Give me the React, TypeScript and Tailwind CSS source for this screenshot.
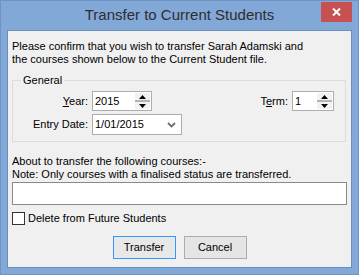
import React from "react";

const font = { fontFamily: '"Liberation Sans", Arial, sans-serif' };

function Arrow({ up }: { up?: boolean }) {
  return (
    <svg width="7" height="4" viewBox="0 0 7 4" className="block">
      {up ? <path d="M0 4 L3.5 0 L7 4 Z" fill="#000" /> : <path d="M0 0 L7 0 L3.5 4 Z" fill="#000" />}
    </svg>
  );
}

function SpinBox({ value, width }: { value: string; width: string }) {
  return (
    <div className={`flex h-[20px] ${width} border border-[#abadb3] bg-white`}>
      <div className="flex flex-1 items-center pl-[2px] text-[11px] leading-[13px] text-black">{value}</div>
      <div className="my-[1px] mr-[1px] flex w-[15px] flex-col">
        <div className="flex flex-1 items-center justify-center bg-[#f2f2f2]">
          <Arrow up />
        </div>
        <div className="h-[2px] bg-[#b4b4b4]" />
        <div className="flex flex-1 items-center justify-center bg-[#f2f2f2]">
          <Arrow />
        </div>
      </div>
    </div>
  );
}

export default function App() {
  return (
    <div
      className="relative flex h-[275px] w-[359px] flex-col border border-[#6f94c4] bg-[#82a8d8] px-[6px] pb-[6px] text-[11px] leading-[13px] text-black"
      style={font}
    >
      <div className="flex h-[29px] items-center justify-center pb-[2px] text-[15px] text-[#2e2e2e]">
        Transfer to Current Students
      </div>
      <div className="absolute right-[6px] top-[1px] flex h-[20px] w-[31px] items-center justify-center bg-[#c75050]">
        <svg width="9" height="8" viewBox="0 0 9 8">
          <path d="M1 0.5 L8 7.5 M8 0.5 L1 7.5" stroke="#fff" strokeWidth="2" />
        </svg>
      </div>
      <div className="flex flex-1 flex-col border border-[#6b8fbd] bg-[#f0f0f0] px-[4px] pb-[5px] pt-[9px]">
        <p>
          Please confirm that you wish to transfer Sarah Adamski and
          <br />
          the courses shown below to the Current Student file.
        </p>
        <fieldset className="mr-[1px] mt-[8px] border border-[#dcdcdc] pb-[6px] pl-0 pr-[11px]">
          <legend className="ml-[8px] px-[2px]">General</legend>
          <div className="mt-[4px] flex items-center">
            <span className="w-[75px] text-right">
              <span className="underline">Y</span>ear:
            </span>
            <div className="ml-[4px]">
              <SpinBox value="2015" width="w-[60px]" />
            </div>
            <span className="ml-auto">
              T<span className="underline">e</span>rm:
            </span>
            <div className="ml-[4px]">
              <SpinBox value="1" width="w-[42px]" />
            </div>
          </div>
          <div className="mt-[3px] flex items-center">
            <span className="w-[75px] text-right">Entry Date:</span>
            <div className="ml-[4px] flex h-[21px] w-[90px] items-center border border-[#acacac] bg-white pl-[2px]">
              <span className="flex-1">1/01/2015</span>
              <svg width="9" height="6" viewBox="0 0 9 6" className="mr-[5px]">
                <path d="M1 1 L4.5 4.5 L8 1" stroke="#6d6d6d" strokeWidth="1.8" fill="none" />
              </svg>
            </div>
          </div>
        </fieldset>
        <p className="mt-[13px]">
          About to transfer the following courses:-
          <br />
          Note: Only courses with a finalised status are transferred.
        </p>
        <div className="mt-[1px] h-[23px] border border-[#8a8a8a] bg-white" />
        <div className="mt-[7px] flex items-center">
          <div className="h-[13px] w-[13px] border border-[#333333] bg-white" />
          <span className="ml-[3px]">Delete from Future Students</span>
        </div>
        <div className="mt-[11px] flex justify-center gap-[8px]">
          <button className="h-[23px] w-[63px] border border-[#3399ff] bg-[#e8e8e8]">Transfer</button>
          <button className="h-[23px] w-[63px] border border-[#acacac] bg-[#e5e5e5]">Cancel</button>
        </div>
      </div>
    </div>
  );
}
